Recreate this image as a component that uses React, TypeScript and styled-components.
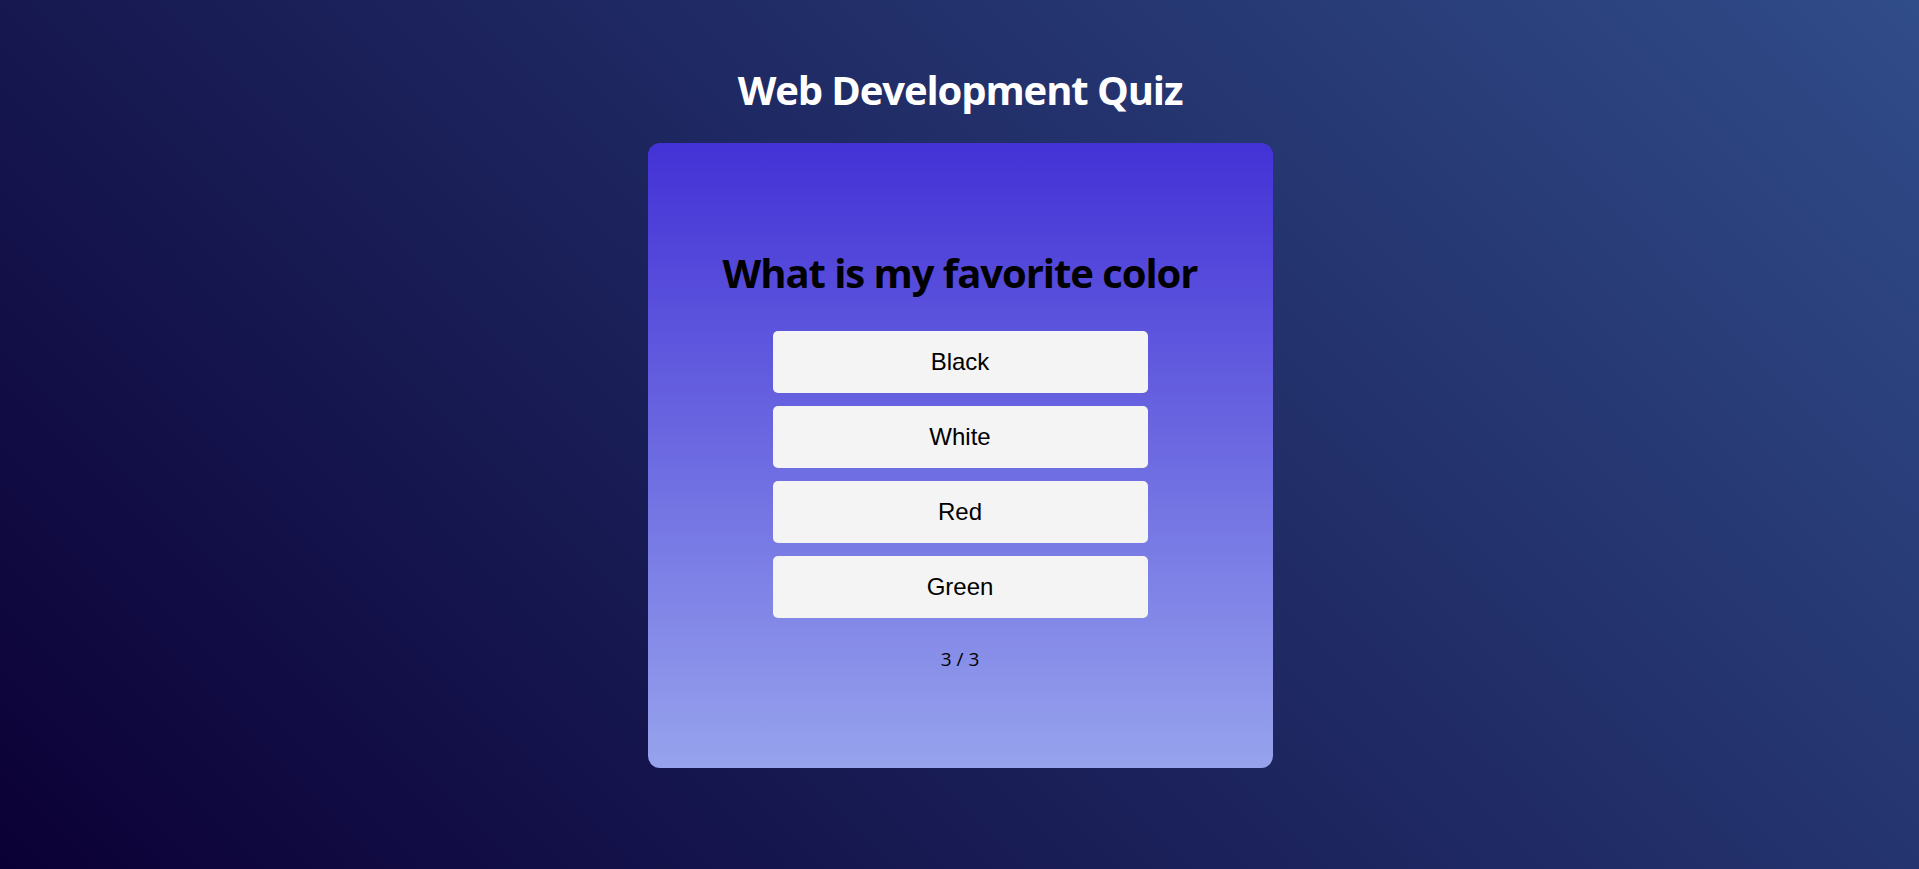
import React from "react";
import styled, { createGlobalStyle } from "styled-components";

const GlobalStyle = createGlobalStyle`
  html, body {
    margin: 0;
    padding: 0;
  }
  body {
    font-family: "Open Sans", "Noto Sans", sans-serif;
  }
  * { box-sizing: border-box; }
`;

const Page = styled.div`
  min-height: 100vh;
  display: flex;
  flex-direction: column;
  align-items: center;
  background: linear-gradient(45deg, #0b0036 0%, #304c89 100%);
  padding-top: 66px;
  padding-left: 1px;
`;

const Title = styled.h1`
  margin: 0 0 29px;
  font-family: "Open Sans", "Noto Sans", sans-serif;
  font-size: 40px;
  line-height: 48px;
  font-weight: 700;
  color: #ffffff;
  letter-spacing: -1.1px;
`;

const Card = styled.div`
  width: 625px;
  height: 625px;
  border-radius: 12px;
  background: linear-gradient(to bottom, #4332d6 0%, #97a3ed 100%);
  display: flex;
  flex-direction: column;
  align-items: center;
  padding-top: 106px;
`;

const Question = styled.h2`
  margin: 0 0 34px;
  font-family: "Open Sans", "Noto Sans", sans-serif;
  font-size: 40px;
  line-height: 48px;
  font-weight: 700;
  color: #000000;
  letter-spacing: -1.05px;
`;

const Options = styled.div`
  width: 60%;
  display: flex;
  flex-direction: column;
  gap: 13px;
`;

const Option = styled.button`
  height: 62px;
  border: none;
  border-radius: 5px;
  background: #f4f4f4;
  color: #000000;
  font-family: "Liberation Sans", Arial, sans-serif;
  font-size: 24px;
  cursor: pointer;
  padding: 0;
`;

const Counter = styled.p`
  margin: 29px 0 0;
  font-family: "Open Sans", "Noto Sans", sans-serif;
  font-size: 19px;
  line-height: 24px;
  color: #000000;
`;

const options = ["Black", "White", "Red", "Green"];

export default function App() {
  return (
    <>
      <GlobalStyle />
      <Page>
        <Title>Web Development Quiz</Title>
        <Card>
          <Question>What is my favorite color</Question>
          <Options>
            {options.map((o) => (
              <Option key={o}>{o}</Option>
            ))}
          </Options>
          <Counter>3 / 3</Counter>
        </Card>
      </Page>
    </>
  );
}
